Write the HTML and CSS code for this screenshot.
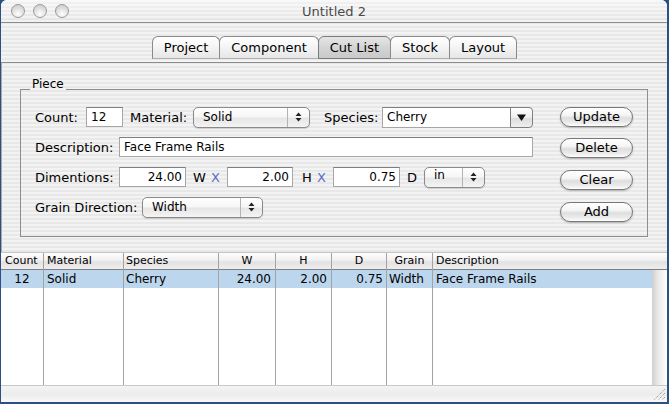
FILE: index.html
```html
<!DOCTYPE html>
<html>
<head>
<meta charset="utf-8">
<title>Untitled 2</title>
<link rel="stylesheet" href="styles.css">
</head>
<body>
<div class="win">
  <div class="titlebar">
    <div class="lights"><span class="light"></span><span class="light"></span><span class="light"></span></div>
    <div class="title">Untitled 2</div>
    <div></div>
  </div>
  <div class="tabbar">
    <div class="tab">Project</div>
    <div class="tab">Component</div>
    <div class="tab sel">Cut List</div>
    <div class="tab">Stock</div>
    <div class="tab">Layout</div>
  </div>
  <div class="pane">
    <div class="group">
      <span class="legend">Piece</span>
      <div class="fields">
        <div class="row">
          <span class="lbl l-count">Count:</span>
          <div class="field f-count">12</div>
          <span class="lbl l-mat">Material:</span>
          <div class="popup p-mat">
            <span class="ptext">Solid</span>
            <span class="parrow"><svg width="7" height="10" viewBox="0 0 7 10"><polygon points="0.5,4 3.5,0.5 6.5,4" fill="#222"/><polygon points="0.5,6 3.5,9.5 6.5,6" fill="#222"/></svg></span>
          </div>
          <span class="lbl l-spec">Species:</span>
          <div class="combo">
            <div class="field ctext">Cherry</div>
            <div class="cbtn"><svg width="9" height="7" viewBox="0 0 9 7"><polygon points="0,0.5 9,0.5 4.5,7" fill="#111"/></svg></div>
          </div>
        </div>
        <div class="row">
          <span class="lbl l-desc">Description:</span>
          <div class="field f-desc">Face Frame Rails</div>
        </div>
        <div class="row">
          <span class="lbl l-desc">Dimentions:</span>
          <div class="field num f-dim">24.00</div>
          <span class="axis ax-w">W</span><span class="times">X</span>
          <div class="field num f-dim f-dim2">2.00</div>
          <span class="axis ax-h">H</span><span class="times">X</span>
          <div class="field num f-dim f-dim3">0.75</div>
          <span class="axis ax-d">D</span>
          <div class="popup p-unit">
            <span class="ptext ptop">in</span>
            <span class="parrow"><svg width="7" height="10" viewBox="0 0 7 10"><polygon points="0.5,4 3.5,0.5 6.5,4" fill="#222"/><polygon points="0.5,6 3.5,9.5 6.5,6" fill="#222"/></svg></span>
          </div>
        </div>
        <div class="row">
          <span class="lbl l-grain">Grain Direction:</span>
          <div class="popup p-grain">
            <span class="ptext">Width</span>
            <span class="parrow"><svg width="7" height="10" viewBox="0 0 7 10"><polygon points="0.5,4 3.5,0.5 6.5,4" fill="#222"/><polygon points="0.5,6 3.5,9.5 6.5,6" fill="#222"/></svg></span>
          </div>
        </div>
      </div>
      <div class="buttons">
        <div class="btn">Update</div>
        <div class="btn">Delete</div>
        <div class="btn">Clear</div>
        <div class="btn">Add</div>
      </div>
    </div>
  </div>
  <div class="table">
    <div class="col c-count"><div class="hd left">Count</div><div class="cell center">12</div></div>
    <div class="col c-mat"><div class="hd left">Material</div><div class="cell left">Solid</div></div>
    <div class="col c-spec"><div class="hd left">Species</div><div class="cell left">Cherry</div></div>
    <div class="col c-w"><div class="hd center">W</div><div class="cell right">24.00</div></div>
    <div class="col c-h"><div class="hd center">H</div><div class="cell right">2.00</div></div>
    <div class="col c-d"><div class="hd center">D</div><div class="cell right">0.75</div></div>
    <div class="col c-grain"><div class="hd center">Grain</div><div class="cell left">Width</div></div>
    <div class="col c-desc"><div class="hd left">Description</div><div class="cell left">Face Frame Rails</div></div>
    <div class="col c-scroll"><div class="hd"></div><div class="track"></div></div>
  </div>
  <div class="bottom">
    <svg class="grip" width="14" height="14" viewBox="0 0 14 14">
      <g stroke="#8a8a8a" stroke-width="1" stroke-dasharray="1 1">
        <line x1="13" y1="2" x2="2" y2="13"/>
        <line x1="13" y1="6" x2="6" y2="13"/>
        <line x1="13" y1="10" x2="10" y2="13"/>
      </g>
    </svg>
  </div>
</div>
</body>
</html>
```

FILE: styles.css
```css
html, body {
  margin: 0;
  padding: 0;
}
body {
  width: 669px;
  height: 404px;
  overflow: hidden;
  background: #2c5180;
  font-family: "DejaVu Sans", "Verdana", sans-serif;
  color: #000;
}
.win {
  margin: 0 2px 0 1px;
  height: 402px;
  border-radius: 6px 6px 0 0;
  overflow: hidden;
  display: flex;
  flex-direction: column;
  background: repeating-linear-gradient(#f3f3f3 0 2px, #e8e8e8 2px 4px);
  background-attachment: fixed;
}

/* title bar */
.titlebar {
  height: 22px;
  border-bottom: 1px solid #8d8d8d;
  display: grid;
  grid-template-columns: 1fr auto 1fr;
  align-items: center;
  background: linear-gradient(rgba(255,255,255,0.55), rgba(255,255,255,0.1)),
              repeating-linear-gradient(#f0f0f0 0 2px, #e2e2e2 2px 4px);
}
.lights {
  display: flex;
  gap: 8px;
  padding-left: 10px;
}
.light {
  width: 14px;
  height: 14px;
  box-sizing: border-box;
  border-radius: 50%;
  border: 1px solid #9a9a9a;
  background: radial-gradient(circle at 50% 75%, #ffffff 0, #e4e4e4 45%, #c4c4c4 100%);
}
.title {
  font-size: 13px;
  color: #4a4a4a;
}

/* tabs */
.tabbar {
  height: 39px;
  box-sizing: border-box;
  padding-top: 13px;
  display: flex;
  justify-content: center;
  align-items: flex-start;
}
.tab {
  height: 23px;
  box-sizing: border-box;
  line-height: 22px;
  font-size: 13px;
  padding: 0 11px;
  border: 1px solid #8a8a8a;
  border-bottom: 1px solid #b0b0b0;
  border-radius: 6px 6px 0 0;
  margin-right: -1px;
  background: linear-gradient(#ffffff, #f4f4f4 50%, #e6e6e6);
}
.tab.sel {
  background: linear-gradient(#e6e6e6, #d4d4d4 50%, #c9c9c9);
  border-color: #7a7a7a;
}

/* pane */
.pane {
  border-top: 1px solid #8c8c8c;
  border-left: 1px solid #a8a8a8;
  padding: 26px 0 15px 18px;
}
.group {
  position: relative;
  width: 628px;
  height: 148px;
  box-sizing: border-box;
  border: 1px solid #8e8e8e;
  padding: 17px 14px 0 14px;
  display: flex;
  justify-content: space-between;
}
.legend {
  position: absolute;
  top: -14px;
  left: 9px;
  padding: 0 2px;
  font-size: 12px;
  line-height: 16px;
  background: repeating-linear-gradient(#f3f3f3 0 2px, #e8e8e8 2px 4px);
  background-attachment: fixed;
}
.fields {
  display: flex;
  flex-direction: column;
  gap: 10px;
}
.row {
  height: 20px;
  display: flex;
  align-items: center;
}
.lbl {
  font-size: 13px;
  white-space: nowrap;
  flex: none;
}
.l-count { width: 51px; }
.l-mat { width: 63px; margin-left: 7px; }
.l-spec { width: 58px; margin-left: 14px; }
.l-desc { width: 84px; }
.l-grain { width: 107px; }

.field {
  height: 20px;
  box-sizing: border-box;
  border: 1px solid #a6a6a6;
  border-top-color: #7e7e7e;
  background: #fff;
  font-size: 12px;
  line-height: 18px;
  padding: 0 4px;
  white-space: nowrap;
  flex: none;
}
.field.num { text-align: right; padding: 0 3px 0 0; }
.f-count { width: 37px; }
.f-desc { width: 414px; }
.f-dim { width: 67px; }
.f-dim2 { width: 66px; margin-left: 8px; }
.f-dim3 { width: 67px; margin-left: 8px; }
.axis {
  font-size: 13px;
  width: 11px;
  flex: none;
  white-space: nowrap;
}
.ax-w { margin-left: 7px; }
.ax-h { margin-left: 9px; width: 8px; }
.ax-d { margin-left: 7px; width: 8px; }
.times {
  font-size: 13px;
  color: #5a6ec6;
  margin-left: 7px;
  width: 8px;
  flex: none;
}

.popup {
  height: 21px;
  box-sizing: border-box;
  border: 1px solid #8a8a8a;
  border-radius: 5px;
  background: linear-gradient(#ffffff, #f6f6f6 45%, #e6e6e6 55%, #f4f4f4);
  box-shadow: 0 1px 1px rgba(0,0,0,0.15);
  display: flex;
  align-items: stretch;
  flex: none;
  font-size: 12px;
}
.ptext {
  flex: 1;
  padding-left: 9px;
  line-height: 19px;
}
.ptext.ptop { line-height: 15px; }
.parrow {
  width: 21px;
  border-left: 1px solid #b4b4b4;
  display: flex;
  align-items: center;
  justify-content: center;
}
.p-mat { width: 117px; }
.p-unit { width: 61px; margin-left: 9px; }
.p-grain { width: 121px; }

.combo {
  width: 151px;
  height: 21px;
  display: flex;
  flex: none;
}
.ctext {
  flex: 1;
  height: 21px;
  line-height: 19px;
}
.cbtn {
  width: 23px;
  height: 21px;
  box-sizing: border-box;
  border: 1px solid #7e7e7e;
  border-radius: 0 4px 4px 0;
  margin-left: -1px;
  background: linear-gradient(#ffffff, #eeeeee 50%, #dcdcdc 55%, #efefef);
  display: flex;
  align-items: center;
  justify-content: center;
}

.buttons {
  width: 73px;
  display: flex;
  flex-direction: column;
}
.btn {
  height: 20px;
  box-sizing: border-box;
  border: 1px solid #777;
  border-radius: 10px;
  background: linear-gradient(#ffffff, #f5f5f5 40%, #dedede 55%, #eaeaea 80%, #ffffff);
  box-shadow: 0 1px 2px rgba(0,0,0,0.25);
  font-size: 13px;
  line-height: 18px;
  text-align: center;
  margin-bottom: 12px;
}
.btn:first-child { margin-bottom: 11px; }

/* table */
.table {
  flex: 1;
  display: flex;
  background: #fff;
  border-top: 1px solid #c4c4c4;
}
.col {
  display: flex;
  flex-direction: column;
  box-sizing: border-box;
  border-right: 1px solid #a3a3a3;
  flex: none;
}
.hd {
  height: 17px;
  box-sizing: border-box;
  border-bottom: 1px solid #7d7d7d;
  background: linear-gradient(#fdfdfd, #f1f1f1 45%, #e2e2e2 55%, #eeeeee);
  font-size: 11px;
  line-height: 16px;
  white-space: nowrap;
  overflow: hidden;
}
.cell {
  height: 18px;
  background: #bcd6ee;
  font-size: 12px;
  line-height: 18px;
  white-space: nowrap;
  overflow: hidden;
}
.left { text-align: left; padding-left: 3px; }
.center { text-align: center; }
.right { text-align: right; padding-right: 4px; }
.hd.left { padding-left: 3px; }
.c-count { width: 43px; }
.c-count .hd.left { padding-left: 4px; }
.c-mat { width: 80px; }
.c-spec { width: 95px; }
.c-spec .hd.left, .c-spec .cell.left { padding-left: 2px; }
.c-w { width: 57px; }
.c-h { width: 56px; }
.c-d { width: 55px; }
.c-d .cell.right { padding-right: 3px; }
.c-grain { width: 46px; }
.c-grain .cell.left { padding-left: 2px; }
.c-desc { width: 219px; border-right: none; }
.c-scroll { width: 15px; border-right: none; }
.track {
  flex: 1;
  background: linear-gradient(to right, #cfcfcf, #e9e9e9 40%, #f7f7f7 80%, #ffffff);
}

.bottom {
  height: 17px;
  box-sizing: border-box;
  border-top: 1px solid #c8c8c8;
  background: linear-gradient(#f4f4f4, #ececec 50%, #f8f8f8);
  display: flex;
  justify-content: flex-end;
  align-items: flex-end;
}
.grip {
  margin: 0 1px 1px 0;
}
```
